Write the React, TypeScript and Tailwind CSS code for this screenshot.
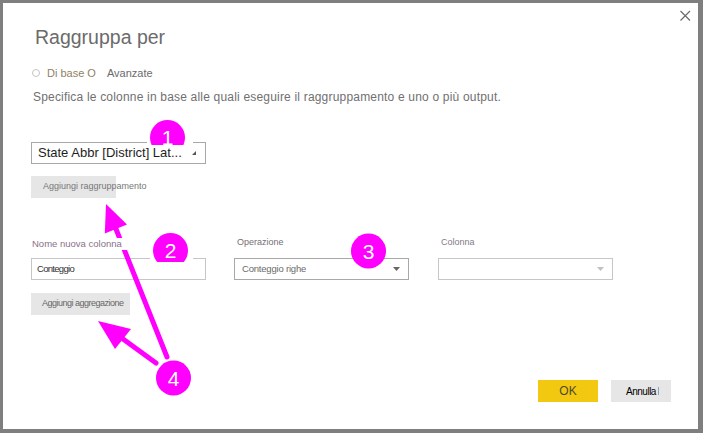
function Annotations() {
  return (
    <svg
      width="703"
      height="433"
      viewBox="0 0 703 433"
      className="absolute left-0 top-0 z-10 pointer-events-none"
    >
      <defs>
        <clipPath id="clip1">
          <rect x="0" y="0" width="703" height="145" />
        </clipPath>
        <clipPath id="clip2">
          <rect x="0" y="200" width="703" height="62" />
        </clipPath>
      </defs>

      {/* close */}
      <path d="M680.5 11L690 20.5M690 11L680.5 20.5" stroke="#6b6b6b" strokeWidth="1.2" />

      {/* 1, half hidden under the dropdown */}
      <rect x="147" y="141" width="46" height="4" fill="#fff" />
      <g clipPath="url(#clip1)">
        <circle cx="167.5" cy="137.5" r="17.5" fill="#ff00ff" />
        <text x="167.5" y="145" textAnchor="middle" fill="#fff" fontSize="21" fontFamily="'Liberation Sans', sans-serif">
          1
        </text>
      </g>

      {/* 2 */}
      <rect x="150" y="257" width="43" height="5" fill="#fff" />
      <g clipPath="url(#clip2)">
        <circle cx="170.5" cy="250.5" r="17.5" fill="#ff00ff" />
        <text x="170.5" y="258" textAnchor="middle" fill="#fff" fontSize="21" fontFamily="'Liberation Sans', sans-serif">
          2
        </text>
      </g>

      {/* 3 */}
      <circle cx="368.5" cy="251" r="17.5" fill="#ff00ff" />
      <text x="368.5" y="258.5" textAnchor="middle" fill="#fff" fontSize="21" fontFamily="'Liberation Sans', sans-serif">
        3
      </text>

      {/* arrows from 4 */}
      <path d="M116 229L167 357" stroke="#ff00ff" strokeWidth="5" strokeLinecap="round" />
      <path d="M106 204L127 224.5L104.8 233.5Z" fill="#ff00ff" />
      <path d="M123 339L156 363" stroke="#ff00ff" strokeWidth="5" strokeLinecap="round" />
      <path d="M98 321L131 329L115 349Z" fill="#ff00ff" />

      <circle cx="173.5" cy="378" r="17.5" fill="#ff00ff" />
      <text x="173.5" y="385.5" textAnchor="middle" fill="#fff" fontSize="21" fontFamily="'Liberation Sans', sans-serif">
        4
      </text>
    </svg>
  );
}

function Caret({ color }: { color: string }) {
  return (
    <svg width="7" height="4" viewBox="0 0 7 4" className="flex-shrink-0">
      <path d="M0 0H7L3.5 4Z" fill={color} />
    </svg>
  );
}

export default function App() {
  return (
    <div className="relative w-[703px] h-[433px] bg-[#7f7f7f] pt-[3px] pl-[3px] pr-[5px] pb-[4px] font-['Liberation_Sans',Arial,sans-serif]">
      <div className="h-full bg-white pl-[28px] flex flex-col">
        {/* Title */}
        <div className="mt-[23px] ml-[4px] text-[19.5px] leading-[22px] text-[#6b6b6b]">Raggruppa per</div>

        {/* Radio */}
        <div className="mt-[19px] h-[12px] flex items-center text-[11px] leading-[12px]">
          <span className="ml-[1px] w-[8px] h-[8px] rounded-full border border-[#c4c4c4]" />
          <span className="ml-[7px] text-[#917f62]">Di base O</span>
          <span className="ml-[11px] text-[#6b6b6b]">Avanzate</span>
        </div>

        {/* Description */}
        <div className="mt-[11px] ml-[2px] text-[12px] leading-[14px] tracking-[0.19px] text-[#707070]">
          Specifica le colonne in base alle quali eseguire il raggruppamento e uno o più output.
        </div>

        {/* Grouping dropdown */}
        <div className="mt-[38px] w-[175px] h-[22px] border border-[#a8a8a8] flex items-center justify-between pl-[6px] pr-[9px]">
          <span className="text-[13px] text-[#1e1e1e] whitespace-nowrap">State Abbr [District] Lat...</span>
          <svg width="4" height="4" viewBox="0 0 4 4" className="mb-[1px]">
            <path d="M4 0V4H0Z" fill="#555" />
          </svg>
        </div>

        <div className="mt-[12px] w-[85px] h-[22px] bg-[#e6e6e6] flex items-center pl-[12px]">
          <span className="text-[9px] text-[#777] whitespace-nowrap">Aggiungi raggruppamento</span>
        </div>

        {/* Aggregation labels */}
        <div className="mt-[38px] h-[12px] flex leading-[12px]">
          <div className="w-[175px]">
            <span className="relative z-20 inline-block bg-white pl-[1px] pr-[8px] text-[9.5px] text-[#87718a]">
              Nome nuova colonna
            </span>
          </div>
          <div className="ml-[28px] w-[175px] pl-[3px] text-[9px] text-[#756f76]">Operazione</div>
          <div className="ml-[29px] w-[175px] pl-[3px] text-[9px] text-[#857a86]">Colonna</div>
        </div>

        {/* Aggregation inputs */}
        <div className="mt-[10px] flex">
          <div className="w-[175px] h-[22px] border border-[#c6c6c6] flex items-center pl-[5px]">
            <span className="text-[9.5px] tracking-[-0.7px] text-[#333]">Conteggio</span>
          </div>
          <div className="ml-[28px] w-[175px] h-[22px] border border-[#a8a8a8] flex items-center justify-between pl-[7px] pr-[8px]">
            <span className="text-[9.5px] tracking-[-0.2px] text-[#6a6a6a]">Conteggio righe</span>
            <Caret color="#666" />
          </div>
          <div className="ml-[29px] w-[175px] h-[22px] border border-[#c6c6c6] flex items-center justify-end pr-[8px]">
            <Caret color="#c0c0c0" />
          </div>
        </div>

        <div className="mt-[13px] w-[99px] h-[22px] bg-[#e6e6e6] flex items-center pl-[11px]">
          <span className="text-[9px] tracking-[-0.5px] text-[#666] whitespace-nowrap">Aggiungi aggregazione</span>
        </div>

        {/* Footer */}
        <div className="mt-[65px] flex justify-end gap-[13px] pr-[27px]">
          <button className="w-[60px] h-[22px] bg-[#f2c811] text-[12px] text-[#4f4a2a]">OK</button>
          <button className="w-[60px] h-[22px] bg-[#e6e6e6] flex items-center justify-center pl-[3px]">
            <span className="text-[10px] tracking-[-0.5px] text-black">Annulla</span>
            <span className="ml-[2px] w-[1px] h-[8px] bg-[#8ba0c8]" />
          </button>
        </div>
      </div>
      <Annotations />
    </div>
  );
}
